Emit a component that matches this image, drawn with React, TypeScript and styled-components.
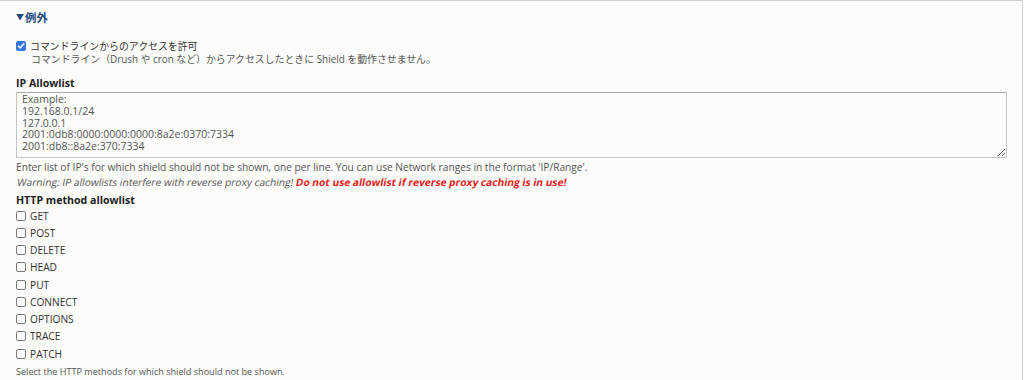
import React from "react";
import styled, { createGlobalStyle } from "styled-components";

const Global = createGlobalStyle`
  html, body { margin: 0; padding: 0; background: #ffffff; }
  body { font-family: "Open Sans", "Noto Sans CJK JP", sans-serif; color: #333; overflow: hidden; }
`;

const Fieldset = styled.div`
  box-sizing: border-box;
  margin-left: -1px;
  width: 1024px;
  height: 380px;
  border: 1px solid #d0d0cc;
  border-bottom: none;
  background: #fcfcfa;
  padding: 7px 16px 0 16px;
  display: flex;
  flex-direction: column;
`;

const Legend = styled.div`
  display: flex;
  align-items: center;
  height: 17px;
  font-size: 11.4px;
  font-weight: 700;
  color: #1d4a7e;
`;

const Triangle = styled.span`
  font-size: 8px;
  margin-right: 1px;
  line-height: 1;
`;

const Row = styled.div<{ $h: number; $mt?: number }>`
  display: flex;
  align-items: center;
  height: ${(p) => p.$h}px;
  margin-top: ${(p) => p.$mt ?? 0}px;
`;

const Box = styled.span<{ $checked?: boolean }>`
  box-sizing: border-box;
  width: 10px;
  height: 10px;
  border-radius: 2px;
  margin-right: 4px;
  flex: none;
  display: flex;
  align-items: center;
  justify-content: center;
  background: ${(p) => (p.$checked ? "#3477e0" : "#fff")};
  border: 1px solid ${(p) => (p.$checked ? "#3477e0" : "#7a7a7a")};
`;

const Label = styled.span<{ $size?: number }>`
  font-size: ${(p) => p.$size ?? 10.2}px;
  color: #333;
`;

const Desc = styled.div<{ $indent?: number; $mt?: number; $h?: number; $size: number }>`
  font-size: ${(p) => p.$size}px;
  color: #555;
  height: ${(p) => p.$h ?? 13}px;
  line-height: ${(p) => p.$h ?? 13}px;
  padding-left: ${(p) => p.$indent ?? 0}px;
  margin-top: ${(p) => p.$mt ?? 0}px;
  white-space: nowrap;
`;

const FieldLabel = styled.div<{ $mt: number }>`
  font-size: 10.6px;
  font-weight: 700;
  color: #222;
  height: 14px;
  line-height: 14px;
  margin-top: ${(p) => p.$mt}px;
`;

const TextArea = styled.textarea`
  box-sizing: border-box;
  width: 991px;
  height: 66px;
  margin: 2px 0 0 0;
  padding: 1px 5px;
  border: 1px solid #c4c4c0;
  border-top-color: #a9a9a6;
  border-radius: 1px;
  background: #fcfcfa;
  font-family: "Open Sans", sans-serif;
  font-size: 10.5px;
  line-height: 11.75px;
  color: #555;
  resize: vertical;
  overflow: hidden;
  outline: none;
`;

const Warning = styled.div`
  height: 13px;
  line-height: 13px;
  white-space: nowrap;
`;

const Oblique = styled.span`
  display: inline-block;
  font-size: 10.2px;
  color: #555;
  transform: skewX(-11deg);
  transform-origin: 0 100%;
`;

const Danger = styled.strong`
  color: #e4201b;
  font-weight: 700;
`;

const Check = () => (
  <svg width="8" height="8" viewBox="0 0 8 8">
    <path d="M1.3 4.2 L3.2 6 L6.8 1.8" fill="none" stroke="#fff" strokeWidth="1.6" strokeLinecap="round" strokeLinejoin="round" />
  </svg>
);

const methods = ["GET", "POST", "DELETE", "HEAD", "PUT", "CONNECT", "OPTIONS", "TRACE", "PATCH"];

const example = `Example:
192.168.0.1/24
127.0.0.1
2001:0db8:0000:0000:0000:8a2e:0370:7334
2001:db8::8a2e:370:7334`;

export default function App() {
  return (
    <>
      <Global />
      <Fieldset>
        <Legend>
          <Triangle>▼</Triangle>例外
        </Legend>
        <Row $h={14} $mt={14}>
          <Box $checked>
            <Check />
          </Box>
          <Label $size={9.9}>コマンドラインからのアクセスを許可</Label>
        </Row>
        <Desc $indent={15} $h={12} $size={9.9}>
          コマンドライン（Drush や cron など）からアクセスしたときに Shield を動作させません。
        </Desc>
        <FieldLabel $mt={11}>IP Allowlist</FieldLabel>
        <TextArea readOnly defaultValue={example} />
        <Desc $mt={3} $size={10.2}>
          Enter list of IP's for which shield should not be shown, one per line. You can use Network ranges in the format 'IP/Range'.
        </Desc>
        <Warning>
          <Oblique>
            Warning: IP allowlists interfere with reverse proxy caching! <Danger>Do not use allowlist if reverse proxy caching is in use!</Danger>
          </Oblique>
        </Warning>
        <FieldLabel $mt={6}>HTTP method allowlist</FieldLabel>
        {methods.map((m) => (
          <Row key={m} $h={17.25}>
            <Box />
            <Label>{m}</Label>
          </Row>
        ))}
        <Desc $mt={3} $size={9.1}>
          Select the HTTP methods for which shield should not be shown.
        </Desc>
      </Fieldset>
    </>
  );
}
